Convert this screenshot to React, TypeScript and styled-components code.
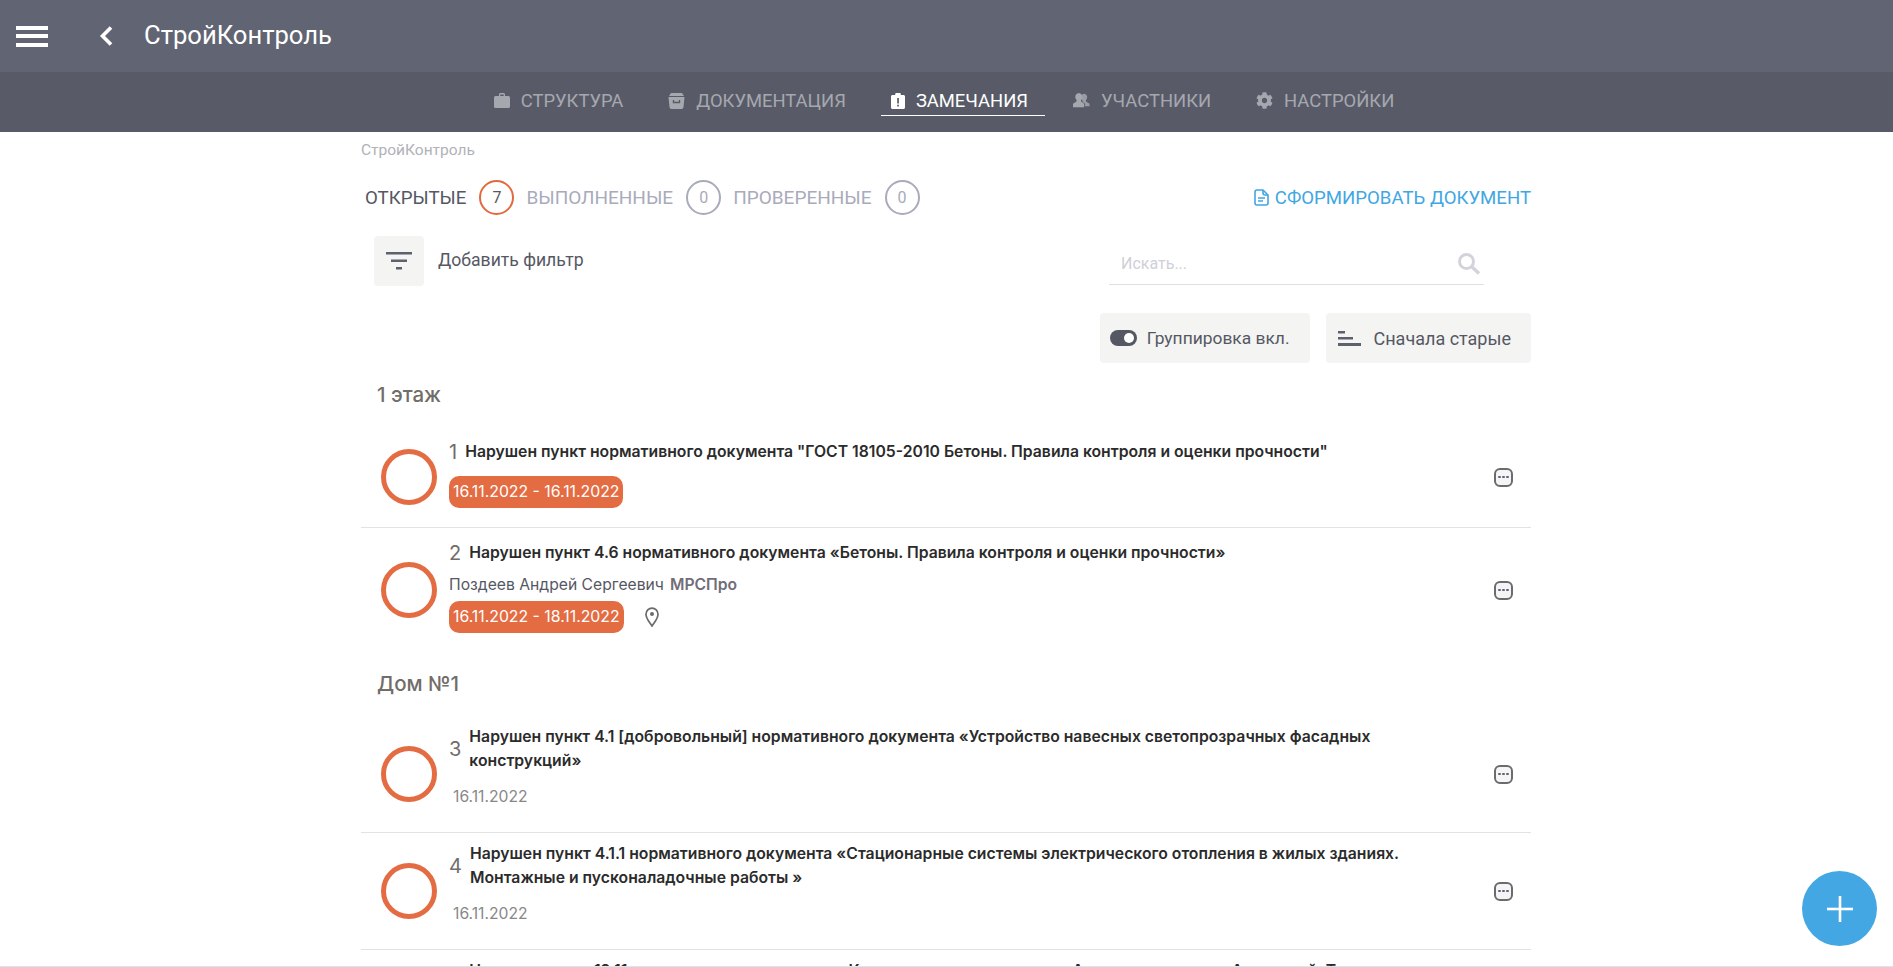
import styled, { createGlobalStyle } from "styled-components";
import { FaCog } from "react-icons/fa";

const GlobalStyle = createGlobalStyle`
  html, body {
    margin: 0;
    height: 100%;
    overflow: hidden;
    background: #fff;
    font-family: Roboto, "Liberation Sans", sans-serif;
  }
`;

const Page = styled.div`
  height: 967px;
  overflow: hidden;
  position: relative;
  border-bottom: 1px solid #d4e8f0;
  box-sizing: border-box;
`;

const TopBar = styled.header`
  height: 72px;
  background: #616472;
  display: flex;
  align-items: center;
  color: #fff;
`;

const Burger = styled.div`
  margin-left: 16px;
  width: 32px;
  height: 21px;
  display: flex;
  flex-direction: column;
  justify-content: space-between;
  span {
    height: 4px;
    background: #fff;
  }
`;

const BackButton = styled.div`
  margin-left: 51px;
  display: flex;
`;

const AppTitle = styled.div`
  margin: -2px 0 0 31px;
  font-size: 25.6px;
`;

const TabBar = styled.nav`
  height: 60px;
  background: #585b67;
  display: flex;
  justify-content: center;
  gap: 45px;
  padding-right: 5px;
`;

const Tab = styled.div<{ $active?: boolean }>`
  display: flex;
  align-items: center;
  gap: 11px;
  height: 29px;
  margin: 14px ${(p) => (p.$active ? "-17px 0 -10px" : "0 0 0")};
  padding: ${(p) => (p.$active ? "0 17px 0 10px" : "0")};
  font-size: 18.4px;
  color: ${(p) => (p.$active ? "#fff" : "#a6a8b0")};
  border-bottom: 1px solid ${(p) => (p.$active ? "#fff" : "transparent")};
  svg {
    flex: none;
  }
`;

const Content = styled.main`
  width: 1170px;
  margin-left: 361px;
`;

const Breadcrumb = styled.div`
  height: 36px;
  line-height: 36px;
  font-size: 15.5px;
  color: #b0b2b8;
`;

const StatusRow = styled.div`
  height: 35px;
  margin-top: 12px;
  display: flex;
  align-items: center;
  padding-left: 4px;
`;

const StatusLabel = styled.span<{ $active?: boolean }>`
  font-size: ${(p) => (p.$active ? "18.7px" : "19px")};
  color: ${(p) => (p.$active ? "#555863" : "#a9abbb")};
`;

const Count = styled.span<{ $active?: boolean }>`
  width: 31px;
  height: 31px;
  margin: 0 12px 0 13px;
  border-radius: 50%;
  border: 2px solid ${(p) => (p.$active ? "#e2693f" : "#a9abbb")};
  display: flex;
  align-items: center;
  justify-content: center;
  font-size: 16px;
  color: ${(p) => (p.$active ? "#555863" : "#a9abbb")};
`;

const DocLink = styled.a`
  margin-left: auto;
  display: flex;
  align-items: center;
  gap: 6px;
  font-size: 18.6px;
  color: #41a7e2;
`;

const FilterRow = styled.div`
  display: flex;
  justify-content: space-between;
  margin-top: 21px;
`;

const FilterLeft = styled.div`
  display: flex;
  margin-left: 13px;
  gap: 14px;
`;

const IconTile = styled.div`
  width: 50px;
  height: 50px;
  border-radius: 4px;
  background: #f4f4f3;
  display: flex;
  align-items: center;
  justify-content: center;
`;

const FilterLabel = styled.div`
  font-size: 17.6px;
  line-height: 48px;
  height: 48px;
  color: #555863;
`;

const SearchBox = styled.div`
  width: 375px;
  height: 49px;
  margin-right: 47px;
  box-sizing: border-box;
  border-bottom: 1px solid #e0e0e4;
  display: flex;
  align-items: center;
  justify-content: space-between;
  padding: 7px 3px 0 12px;
  color: #cfcfd8;
  font-size: 16px;
`;

const ControlsRow = styled.div`
  display: flex;
  justify-content: flex-end;
  gap: 16px;
  margin-top: 27px;
`;

const ControlButton = styled.div`
  height: 50px;
  box-sizing: border-box;
  padding: 0 20px 0 10px;
  border-radius: 4px;
  background: #f4f4f3;
  display: flex;
  align-items: center;
  gap: 10px;
  font-size: 17.4px;
  color: #555863;
`;

const SortButton = styled(ControlButton)`
  padding-left: 12px;
  gap: 13px;
  font-size: 18px;
`;

const Toggle = styled.span`
  width: 27px;
  height: 16px;
  border-radius: 8px;
  background: #555863;
  position: relative;
  &::after {
    content: "";
    position: absolute;
    right: 3px;
    top: 3px;
    width: 10px;
    height: 10px;
    border-radius: 50%;
    background: #fff;
  }
`;

const GroupTitle = styled.h2`
  margin: 20px 0 20px 16px;
  height: 24px;
  line-height: 24px;
  font-family: Inter, sans-serif;
  font-size: 20.5px;
  font-weight: 500;
  color: #716d69;
`;

const Row = styled.div<{ $height: number; $last?: boolean }>`
  height: ${(p) => p.$height}px;
  box-sizing: border-box;
  display: flex;
  align-items: center;
  border-bottom: ${(p) => (p.$last ? "none" : "1px solid #e2e2e2")};
  font-family: Inter, sans-serif;
`;

const Ring = styled.div`
  width: 56px;
  height: 56px;
  box-sizing: border-box;
  border: 5px solid #e46c43;
  border-radius: 50%;
  margin: 0 12px 0 20px;
  flex: none;
`;

const RowBody = styled.div<{ $top: number }>`
  flex: 1;
  min-width: 0;
  align-self: flex-start;
  padding-top: ${(p) => p.$top}px;
`;

const TitleLine = styled.div`
  display: flex;
  align-items: center;
  gap: 8px;
`;

const RowNumber = styled.span`
  font-size: 20px;
  color: #716d69;
`;

const RowTitle = styled.div`
  width: 960px;
  font-size: 15.75px;
  font-weight: 600;
  line-height: 24px;
  color: #2b2b2b;
`;

const Author = styled.div`
  margin-top: 11px;
  font-size: 15.7px;
  line-height: 18px;
  color: #555863;
  strong {
    margin-left: 6px;
    font-weight: 600;
    color: #716d7a;
  }
`;

const DateLine = styled.div<{ $tight?: boolean }>`
  display: flex;
  align-items: center;
  margin-top: ${(p) => (p.$tight ? "7px" : "12px")};
  gap: 21px;
`;

const DateBadge = styled.span`
  padding: 0 4px;
  height: 32px;
  line-height: 32px;
  border-radius: 10px;
  background: #e46c43;
  color: #fff;
  font-size: 15.8px;
`;

const PlainDate = styled.div`
  margin: 15px 0 0 4px;
  font-size: 15.7px;
  line-height: 18px;
  color: #888;
`;

const RowMenu = styled.div`
  width: 19px;
  height: 19px;
  margin-right: 18px;
  flex: none;
  box-sizing: border-box;
  border: 2px solid #6f6a6a;
  border-radius: 6px;
  background: #f5f5f7;
  display: flex;
  align-items: center;
  justify-content: center;
  gap: 1.5px;
  span {
    width: 2.5px;
    height: 2.5px;
    border-radius: 50%;
    background: #5f6272;
  }
`;

const Fab = styled.div`
  position: absolute;
  right: 16px;
  bottom: 20px;
  width: 75px;
  height: 75px;
  border-radius: 50%;
  background: #42a7e2;
  display: flex;
  align-items: center;
  justify-content: center;
`;

const ChevronIcon = () => (
  <svg width="14" height="20" viewBox="0 0 14 20" fill="none" stroke="#fff" strokeWidth="3.6">
    <path d="M12 1.500L3.500 10l8.500 8.500" />
  </svg>
);

const BagIcon = () => (
  <svg width="16" height="15" viewBox="0 0 16 15" fill="#a6a8b0">
    <path d="M5 3.500V1.500C5 .7 5.700 0 6.500 0h3C10.300 0 11 .7 11 1.500v2H9.700V1.400H6.300v2.100z" />
    <rect x="0" y="3" width="16" height="12" rx="1.600" />
  </svg>
);

const ArchiveIcon = () => (
  <svg width="17" height="16" viewBox="0 0 17 16" fill="#a6a8b0">
    <path d="M3 0h11l2 3H1z" />
    <path d="M.5 4h16l-1 10c-.1 1-.9 2-2 2h-10c-1.100 0-1.900-1-2-2z" />
    <path d="M5.500 7v2.500h6V7" fill="none" stroke="#585b67" strokeWidth="1.400" />
  </svg>
);

const ClipboardIcon = () => (
  <svg width="14" height="16" viewBox="0 0 14 16">
    <path d="M1.500 2H4.200V1.200C4.200.5 4.700 0 5.400 0h3.200c.7 0 1.200.5 1.200 1.200V2h2.700c.8 0 1.500.7 1.500 1.500v11c0 .8-.7 1.500-1.500 1.500h-11C.7 16 0 15.300 0 14.500v-11C0 2.700.7 2 1.500 2z" fill="#fff" />
    <rect x="6.200" y="5" width="1.700" height="5.500" fill="#585b67" />
    <rect x="6.200" y="11.700" width="1.700" height="1.800" fill="#585b67" />
  </svg>
);

const UsersIcon = () => (
  <svg width="17" height="17" viewBox="0 0 19 17" fill="#a6a8b0">
    <path d="M12.500 1a3.500 4 0 0 1 2 7.200v1.300l4 2.500V15h-5v-3l-3-2V8.200A4 4 0 0 1 12.500 1z" opacity=".85" />
    <path d="M6.500 0a4 4.500 0 0 1 2.500 8v1.500l3.500 2.500v4H0v-4l4-2.500V8A4 4.500 0 0 1 6.500 0z" />
  </svg>
);

const FilterIcon = () => (
  <svg width="26" height="18" viewBox="0 0 26 18" fill="#5d606e">
    <rect x="0" y="0" width="26" height="2.500" />
    <rect x="5" y="7.500" width="16" height="2.500" />
    <rect x="10" y="15" width="6" height="2.500" />
  </svg>
);

const SortIcon = () => (
  <svg width="23" height="15" viewBox="0 0 23 15" fill="#5d606e">
    <rect x="0" y="0" width="7" height="2.500" />
    <rect x="0" y="6" width="15" height="2.500" />
    <rect x="0" y="12" width="23" height="3" />
  </svg>
);

const SearchIcon = () => (
  <svg width="24" height="24" viewBox="0 0 24 24" fill="none" stroke="#d3d3dc">
    <circle cx="9.500" cy="9.500" r="7" strokeWidth="3" />
    <path d="M14.500 14.500l7.500 7" strokeWidth="3.500" />
  </svg>
);

const DocIcon = () => (
  <svg width="15" height="17" viewBox="0 0 15 17" fill="none" stroke="#41a7e2" strokeWidth="1.600">
    <path d="M3 1h6l5 5v8c0 1.100-.9 2-2 2H3c-1.100 0-2-.9-2-2V3c0-1.100.9-2 2-2z" />
    <path d="M9 1v3c0 1.100.9 2 2 2h3" />
    <path d="M4 9h7M4 12h5" />
  </svg>
);

const PinIcon = () => (
  <svg width="14" height="20" viewBox="0 0 14 20" fill="none" stroke="#6b6b6b" strokeWidth="1.700">
    <path d="M7 19C4 14.500 1 11.500 1 7.200A6 6 0 0 1 13 7.200C13 11.500 10 14.500 7 19z" />
    <circle cx="7" cy="7" r="2" fill="#6b6b6b" stroke="none" />
  </svg>
);

const PlusIcon = () => (
  <svg width="26" height="26" viewBox="0 0 26 26" fill="#fff">
    <rect x="11.700" y="0" width="2.600" height="26" />
    <rect x="0" y="11.700" width="26" height="2.600" />
  </svg>
);

const tabs = [
  { label: "СТРУКТУРА", icon: <BagIcon /> },
  { label: "ДОКУМЕНТАЦИЯ", icon: <ArchiveIcon /> },
  { label: "ЗАМЕЧАНИЯ", icon: <ClipboardIcon />, active: true },
  { label: "УЧАСТНИКИ", icon: <UsersIcon /> },
  { label: "НАСТРОЙКИ", icon: <FaCog size={17} color="#a6a8b0" /> },
];

const Menu = () => (
  <RowMenu>
    <span />
    <span />
    <span />
  </RowMenu>
);

export default function App() {
  return (
    <Page>
      <GlobalStyle />
      <TopBar>
        <Burger>
          <span />
          <span />
          <span />
        </Burger>
        <BackButton>
          <ChevronIcon />
        </BackButton>
        <AppTitle>СтройКонтроль</AppTitle>
      </TopBar>
      <TabBar>
        {tabs.map((t) => (
          <Tab key={t.label} $active={t.active}>
            {t.icon}
            {t.label}
          </Tab>
        ))}
      </TabBar>
      <Content>
        <Breadcrumb>СтройКонтроль</Breadcrumb>
        <StatusRow>
          <StatusLabel $active>ОТКРЫТЫЕ</StatusLabel>
          <Count $active>7</Count>
          <StatusLabel>ВЫПОЛНЕННЫЕ</StatusLabel>
          <Count>0</Count>
          <StatusLabel>ПРОВЕРЕННЫЕ</StatusLabel>
          <Count>0</Count>
          <DocLink>
            <DocIcon />
            СФОРМИРОВАТЬ ДОКУМЕНТ
          </DocLink>
        </StatusRow>
        <FilterRow>
          <FilterLeft>
            <IconTile>
              <FilterIcon />
            </IconTile>
            <FilterLabel>Добавить фильтр</FilterLabel>
          </FilterLeft>
          <SearchBox>
            Искать...
            <SearchIcon />
          </SearchBox>
        </FilterRow>
        <ControlsRow>
          <ControlButton>
            <Toggle />
            Группировка вкл.
          </ControlButton>
          <SortButton>
            <SortIcon />
            Сначала старые
          </SortButton>
        </ControlsRow>

        <GroupTitle>1 этаж</GroupTitle>
        <Row $height={101}>
          <Ring />
          <RowBody $top={13}>
            <TitleLine>
              <RowNumber>1</RowNumber>
              <RowTitle>Нарушен пункт нормативного документа "ГОСТ 18105-2010 Бетоны. Правила контроля и оценки прочности"</RowTitle>
            </TitleLine>
            <DateLine>
              <DateBadge>16.11.2022 - 16.11.2022</DateBadge>
            </DateLine>
          </RowBody>
          <Menu />
        </Row>
        <Row $height={124} $last>
          <Ring />
          <RowBody $top={13}>
            <TitleLine>
              <RowNumber>2</RowNumber>
              <RowTitle>Нарушен пункт 4.6 нормативного документа «Бетоны. Правила контроля и оценки прочности»</RowTitle>
            </TitleLine>
            <Author>
              Поздеев Андрей Сергеевич<strong>МРСПро</strong>
            </Author>
            <DateLine $tight>
              <DateBadge>16.11.2022 - 18.11.2022</DateBadge>
              <PinIcon />
            </DateLine>
          </RowBody>
          <Menu />
        </Row>

        <GroupTitle>Дом №1</GroupTitle>
        <Row $height={117}>
          <Ring />
          <RowBody $top={9}>
            <TitleLine>
              <RowNumber>3</RowNumber>
              <RowTitle>Нарушен пункт 4.1 [добровольный] нормативного документа «Устройство навесных светопрозрачных фасадных конструкций»</RowTitle>
            </TitleLine>
            <PlainDate>16.11.2022</PlainDate>
          </RowBody>
          <Menu />
        </Row>
        <Row $height={117}>
          <Ring />
          <RowBody $top={9}>
            <TitleLine>
              <RowNumber>4</RowNumber>
              <RowTitle>Нарушен пункт 4.1.1 нормативного документа «Стационарные системы электрического отопления в жилых зданиях. Монтажные и пусконаладочные работы »</RowTitle>
            </TitleLine>
            <PlainDate>16.11.2022</PlainDate>
          </RowBody>
          <Menu />
        </Row>
        <Row $height={117} $last>
          <Ring />
          <RowBody $top={9}>
            <TitleLine>
              <RowNumber>5</RowNumber>
              <RowTitle>Нарушен пункт 12.11 нормативного документа «Конструкции стальные и их Антикоррозионная. Алюминий. Типовые решения»</RowTitle>
            </TitleLine>
            <PlainDate>16.11.2022</PlainDate>
          </RowBody>
          <Menu />
        </Row>
      </Content>
      <Fab>
        <PlusIcon />
      </Fab>
    </Page>
  );
}
